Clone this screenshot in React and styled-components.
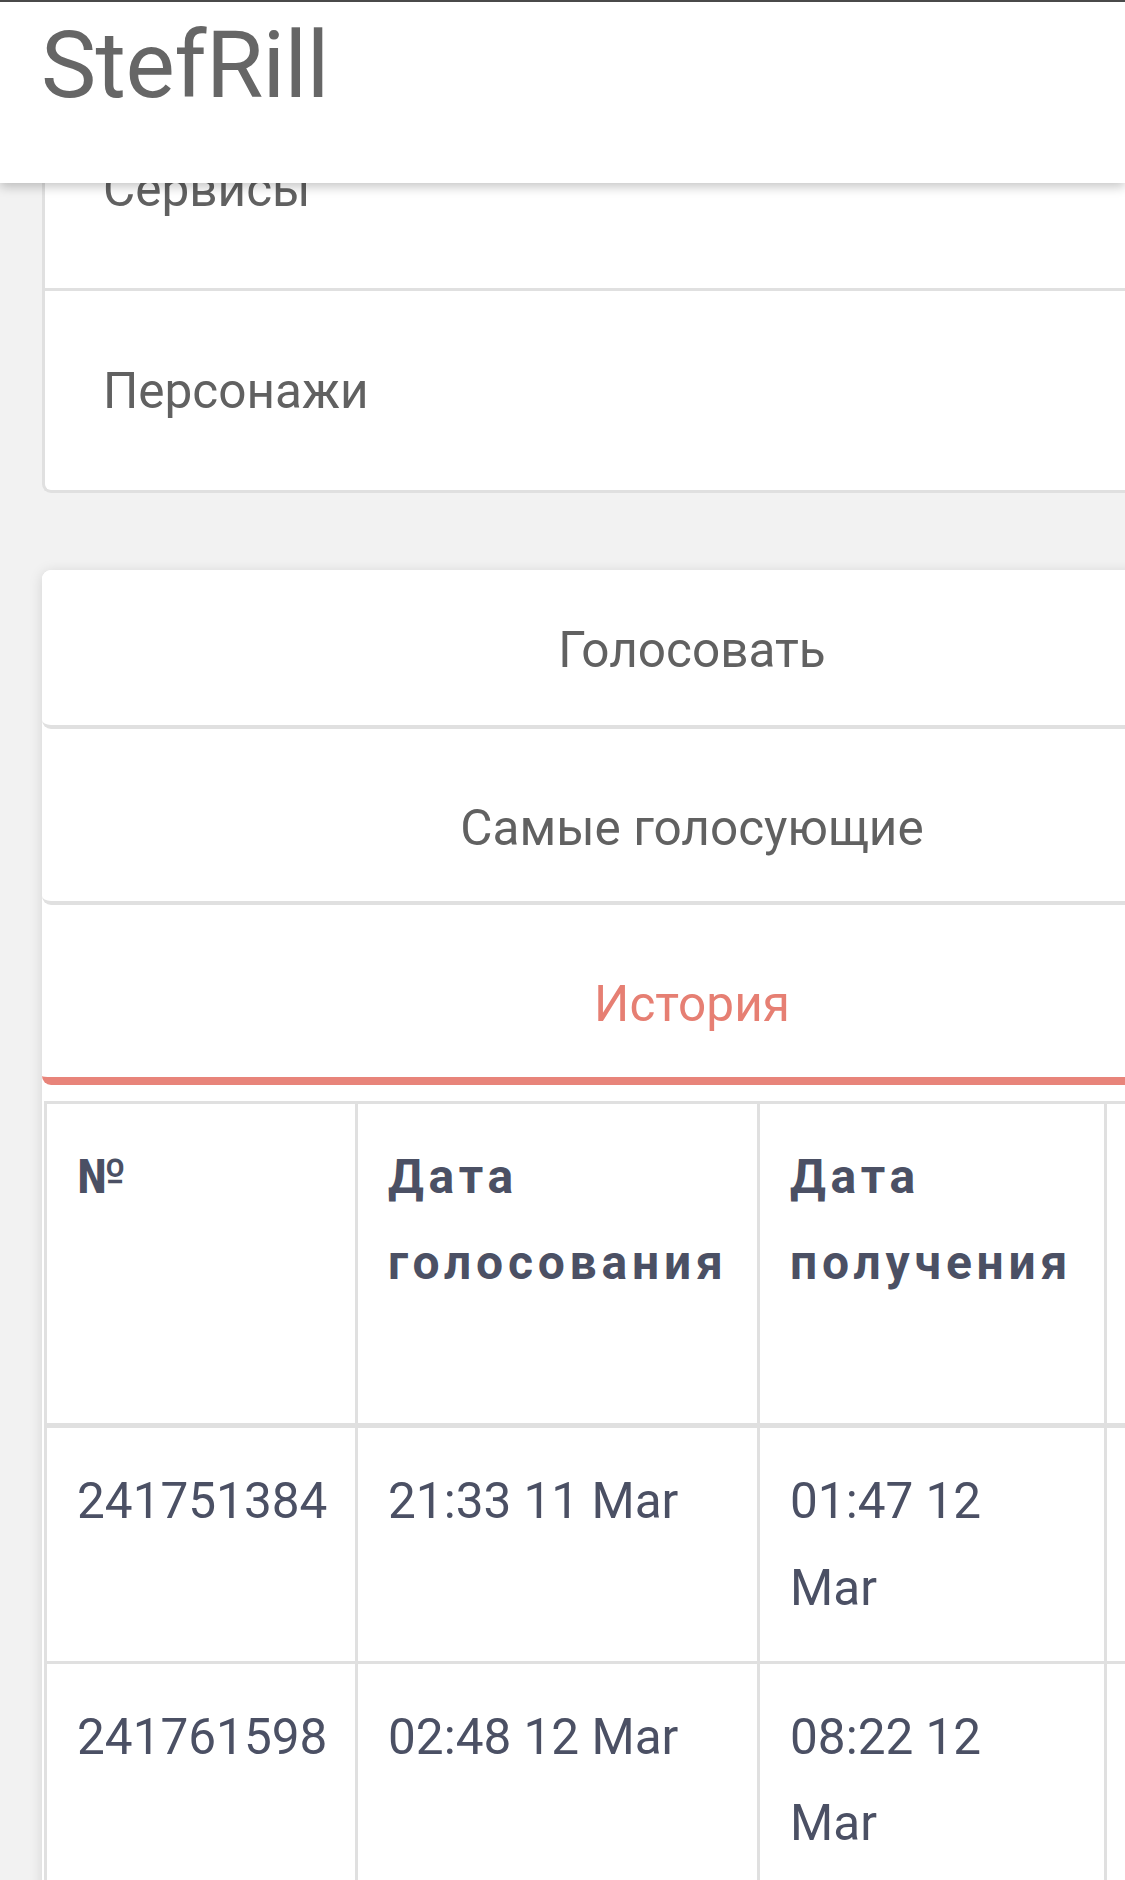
import React from "react";
import styled, { createGlobalStyle } from "styled-components";

const GlobalStyle = createGlobalStyle`
  html, body {
    margin: 0;
    padding: 0;
    background: #f2f2f2;
    overflow-x: hidden;
  }
  body {
    font-family: Roboto, "Noto Sans", "Liberation Sans", sans-serif;
  }
`;

const Page = styled.div`
  width: 100%;
  overflow: hidden;
`;

// fixed top bar, lies over the scrolled content
const Header = styled.header`
  position: fixed;
  top: 0;
  left: 0;
  right: 0;
  z-index: 10;
  height: 181px;
  box-sizing: content-box;
  border-top: 2px solid #4a4a4a;
  background: #fff;
  box-shadow: 0 4px 10px rgba(0, 0, 0, 0.22);
`;

const Brand = styled.div`
  padding: 17px 0 0 41px;
  font-size: 93px;
  line-height: 1;
  color: #666;
  letter-spacing: -0.6px;
`;

const Main = styled.main`
  padding: 89px 0 0 42px;
`;

const MenuCard = styled.nav`
  width: 1300px;
  background: #fff;
  border-left: 3px solid #e0e0e0;
  border-bottom: 3px solid #e0e0e0;
  border-bottom-left-radius: 9px;
`;

const MenuItem = styled.a`
  display: flex;
  align-items: center;
  height: 199px;
  padding-left: 58px;
  font-size: 49.5px;
  color: #616161;
  text-decoration: none;
  & + & {
    border-top: 3px solid #e0e0e0;
  }
`;

const TabsCard = styled.section`
  width: 1300px;
  margin-top: 77px;
  background: #fff;
  border-radius: 9px 9px 0 0;
  box-shadow: 0 2px 14px rgba(0, 0, 0, 0.13);
`;

const Tab = styled.button`
  display: block;
  width: 100%;
  box-sizing: border-box;
  padding: ${p => (p.$first ? "52px 0 47px" : "71px 0 45px")};
  background: #fff;
  border: 0;
  border-bottom: ${p => (p.$active ? "8px solid #e8847a" : "4px solid #e0e0e0")};
  border-radius: 9px;
  font-family: inherit;
  font-size: 49.5px;
  line-height: 56px;
  text-align: center;
  color: ${p => (p.$active ? "#e67f73" : "#616161")};
  cursor: pointer;
`;

const TableWrap = styled.div`
  padding: 16px 0 0 2px;
`;

const Table = styled.table`
  border-collapse: collapse;
  table-layout: fixed;
  width: 1360px;
  font-size: 49.5px;
  line-height: 86.4px;
  color: #4b5064;

  th, td {
    border: 3px solid #e0e0e0;
    padding: 30px 38px 30px 30px;
    text-align: left;
    vertical-align: top;
  }
  th {
    font-size: 48px;
    font-weight: 700;
    letter-spacing: 0.1em;
    border-bottom-width: 5px;
  }
`;

const history = [
  { id: "241751384", voted: "21:33 11 Mar", got: "01:47 12 Mar", votes: "1" },
  { id: "241761598", voted: "02:48 12 Mar", got: "08:22 12 Mar", votes: "1" },
  { id: "241770212", voted: "09:03 12 Mar", got: "13:40 12 Mar", votes: "1" },
];

export default function App() {
  return (
    <Page>
      <GlobalStyle />
      <Header>
        <Brand>StefRill</Brand>
      </Header>
      <Main>
        <MenuCard>
          <MenuItem>Сервисы</MenuItem>
          <MenuItem>Персонажи</MenuItem>
        </MenuCard>
        <TabsCard>
          <Tab $first>Голосовать</Tab>
          <Tab>Самые голосующие</Tab>
          <Tab $active>История</Tab>
          <TableWrap>
            <Table>
              <colgroup>
                <col style={{ width: 311 }} />
                <col style={{ width: 402 }} />
                <col style={{ width: 347 }} />
                <col style={{ width: 300 }} />
              </colgroup>
              <thead>
                <tr>
                  <th>№</th>
                  <th>Дата голосования</th>
                  <th>Дата получения</th>
                  <th>Кол-во полученных голосов</th>
                </tr>
              </thead>
              <tbody>
                {history.map(r => (
                  <tr key={r.id}>
                    <td>{r.id}</td>
                    <td>{r.voted}</td>
                    <td>{r.got}</td>
                    <td>{r.votes}</td>
                  </tr>
                ))}
              </tbody>
            </Table>
          </TableWrap>
        </TabsCard>
      </Main>
    </Page>
  );
}
